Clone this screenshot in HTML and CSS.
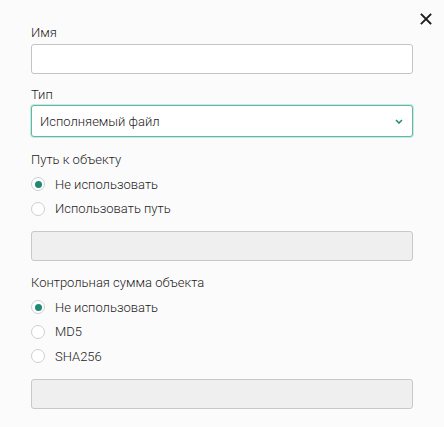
FILE: index.html
```html
<!DOCTYPE html>
<html lang="ru">
<head>
<meta charset="utf-8">
<link rel="stylesheet" href="styles.css">
</head>
<body>
<div class="panel">
  <button class="close" aria-label="Закрыть">
    <svg width="12" height="12" viewBox="0 0 12 12"><path d="M1.5 1.5 L10.5 10.5 M10.5 1.5 L1.5 10.5" stroke="#1d1d1b" stroke-width="1.8" stroke-linecap="square"/></svg>
  </button>
  <div class="field">
    <div class="label">Имя</div>
    <div class="input"></div>
  </div>
  <div class="field">
    <div class="label">Тип</div>
    <div class="select">
      <span>Исполняемый файл</span>
      <svg class="chev" width="8" height="5" viewBox="0 0 8 5"><path d="M1 1 L4 4 L7 1" fill="none" stroke="#1f8a73" stroke-width="1.5"/></svg>
    </div>
  </div>
  <div class="group">
    <div class="label">Путь к объекту</div>
    <div class="radio checked"><span class="dot"></span><span>Не использовать</span></div>
    <div class="radio"><span class="dot"></span><span>Использовать путь</span></div>
    <div class="input disabled"></div>
  </div>
  <div class="group">
    <div class="label">Контрольная сумма объекта</div>
    <div class="radio checked"><span class="dot"></span><span>Не использовать</span></div>
    <div class="radio"><span class="dot"></span><span>MD5</span></div>
    <div class="radio"><span class="dot"></span><span>SHA256</span></div>
    <div class="input disabled"></div>
  </div>
</div>
</body>
</html>
```
FILE: styles.css
```css
html, body {
  margin: 0;
  padding: 0;
  background: #fbfbfb;
}
body {
  font-family: Roboto, "Noto Sans", "Liberation Sans", sans-serif;
  font-size: 13px;
  font-weight: 300;
  color: #1d1d1b;
}
.panel {
  position: relative;
  padding: 24px 31px 0 31px;
}
.close {
  position: absolute;
  top: 13px;
  right: 12px;
  width: 12px;
  height: 12px;
  padding: 0;
  border: 0;
  background: none;
  display: flex;
}
.label {
  height: 18px;
  line-height: 18px;
}
.field .label {
  margin-bottom: 2px;
}
.input {
  box-sizing: border-box;
  height: 30px;
  border: 1px solid #c4c4c4;
  border-radius: 3px;
  background: #ffffff;
}
.field + .field {
  margin-top: 12px;
}
.select {
  box-sizing: border-box;
  height: 32px;
  margin-top: -1px;
  border: 1px solid #5fb9a6;
  border-radius: 3px;
  background: #fff;
  box-shadow: 0 0 0 1px #c9e8e0;
  display: flex;
  align-items: center;
  justify-content: space-between;
  padding: 0 9px 0 8px;
}
.chev {
  margin-top: 1px;
}
.group {
  margin-top: 14px;
}
.group .label {
  margin-bottom: 3px;
}
.radio {
  height: 24.5px;
  display: flex;
  align-items: center;
  gap: 10px;
}
.dot {
  box-sizing: border-box;
  width: 14px;
  height: 14px;
  border-radius: 50%;
  border: 1px solid #cfcfcf;
  background: #fff;
  display: flex;
  align-items: center;
  justify-content: center;
}
.checked .dot::after {
  content: "";
  width: 7px;
  height: 7px;
  border-radius: 50%;
  background: #1f8a73;
}
.input.disabled {
  margin-top: 10px;
  background: #efefef;
  border-color: #c8c8c8;
}
.group + .group {
  margin-top: 13px;
}
```
